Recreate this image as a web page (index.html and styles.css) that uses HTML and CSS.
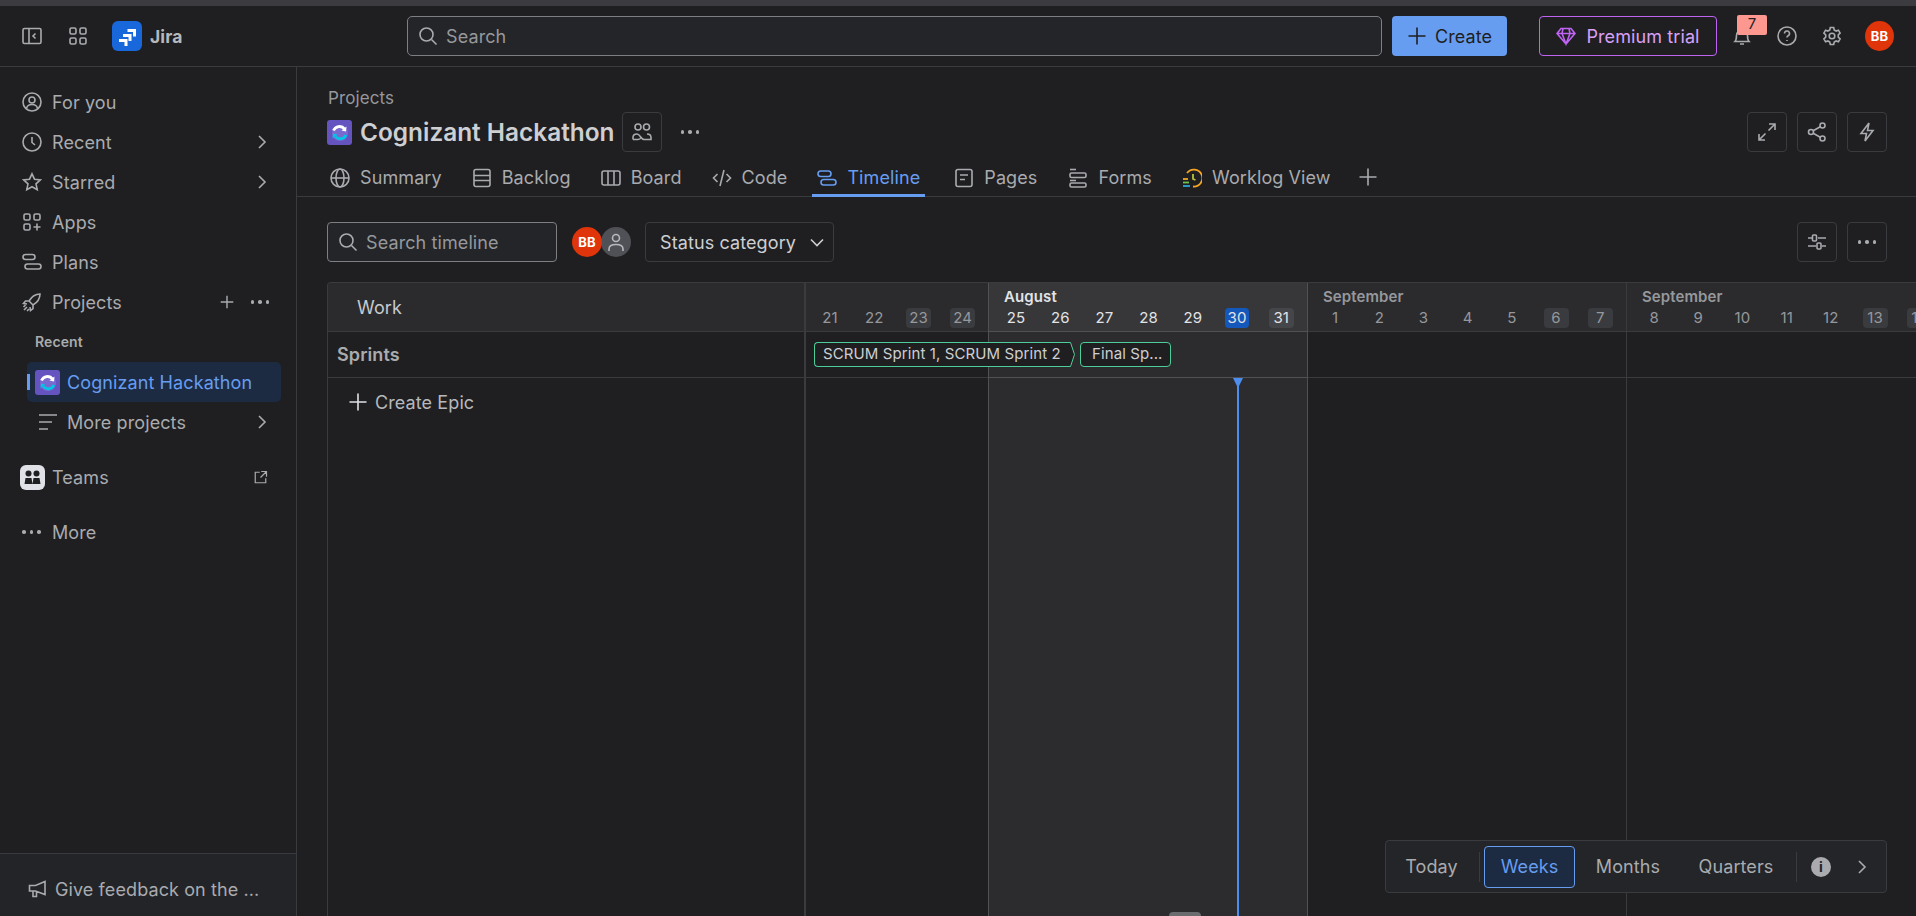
FILE: index.html
```html
<!DOCTYPE html>
<html lang="en">
<head>
    <meta charset="UTF-8">
    <title>Timeline - Cognizant Hackathon - Jira</title>
    <link rel="stylesheet" href="styles.css">
</head>
<body>

<div class="top-strip"></div>

<header class="topbar">
    <svg class="icon side-toggle" viewBox="0 0 20 20"><rect x="1" y="2.5" width="18" height="15" rx="1.5"/><path d="M7 3v14M13.5 7.5 11 10l2.5 2.5"/></svg>
    <svg class="icon grid-toggle" viewBox="0 0 20 20"><rect x="2" y="2" width="6" height="6" rx="1.5"/><rect x="12" y="2" width="6" height="6" rx="1.5"/><rect x="2" y="12" width="6" height="6" rx="1.5"/><rect x="12" y="12" width="6" height="6" rx="1.5"/></svg>
    <div class="jira-logo">
        <svg viewBox="0 0 30 30"><path d="M7 19.500h7v5.500M11 14.500h7v5.500M15.500 9.500h7v6" fill="none" stroke="#fff" stroke-width="3"/></svg>
    </div>
    <span class="jira-name">Jira</span>

    <div class="global-search">
        <svg class="icon" viewBox="0 0 20 20"><circle cx="8.500" cy="8.500" r="6.500"/><path d="m13.500 13.500 5 5"/></svg>
        <span>Search</span>
    </div>
    <button class="create-btn">
        <svg class="icon" viewBox="0 0 20 20"><path d="M10 1.500v17M1.500 10h17"/></svg>
        Create
    </button>
    <button class="premium-btn">
        <svg class="icon" viewBox="0 0 20 20"><path d="M5 2.500h10l4 5-9 10.500L1 7.500zM1 7.500h18M7 2.500 6 7.500l4 10.500 4-10.500-1-5"/></svg>
        Premium trial
    </button>
    <div class="bell">
        <svg class="icon" viewBox="0 0 20 20"><path d="M3 15.500c1.500-1.500 1.500-3 1.500-6a5.500 5.500 0 0 1 11 0c0 3 0 4.500 1.500 6zM8 18h4"/></svg>
        <span class="bell-count">7</span>
    </div>
    <svg class="icon help" viewBox="0 0 20 20"><circle cx="10" cy="10" r="9"/><path d="M7.500 7.500a2.500 2.500 0 1 1 3.600 2.300c-.8.4-1.100.9-1.100 1.700M10 14v1"/></svg>
    <svg class="icon gear" viewBox="0 0 20 20"><circle cx="10" cy="10" r="2.800"/><path d="M8.300 1.500h3.400l.5 2.400 1.900 1.100 2.300-.8 1.700 3-1.800 1.600v2.400l1.800 1.600-1.700 3-2.300-.8-1.900 1.100-.5 2.400H8.300l-.5-2.400-1.900-1.100-2.300.8-1.700-3 1.800-1.600V8.800L1.900 7.200l1.700-3 2.300.8 1.900-1.100z"/></svg>
    <span class="avatar avatar-top">BB</span>
</header>

<div class="layout">
    <nav class="sidebar">
        <div class="side-list">
            <a class="side-item">
                <svg class="icon" viewBox="0 0 20 20"><circle cx="10" cy="10" r="9"/><circle cx="10" cy="8" r="3"/><path d="M4.500 16.500c.5-3 2.500-4 5.500-4s5 1 5.500 4"/></svg>
                For you
            </a>
            <a class="side-item">
                <svg class="icon" viewBox="0 0 20 20"><circle cx="10" cy="10" r="9"/><path d="M10 5v5.500l3 2.500"/></svg>
                Recent
                <svg class="icon chevron" viewBox="0 0 20 20"><path d="m7 4 6 6-6 6"/></svg>
            </a>
            <a class="side-item">
                <svg class="icon" viewBox="0 0 20 20"><path d="m10 1.800 2.500 5.400 5.900.7-4.400 4 1.200 5.800-5.200-3-5.200 3 1.200-5.800-4.400-4 5.900-.7z"/></svg>
                Starred
                <svg class="icon chevron" viewBox="0 0 20 20"><path d="m7 4 6 6-6 6"/></svg>
            </a>
            <a class="side-item">
                <svg class="icon" viewBox="0 0 20 20"><rect x="2" y="2" width="6" height="6" rx="1.500"/><rect x="12" y="2" width="6" height="6" rx="1.500"/><rect x="2" y="12" width="6" height="6" rx="1.500"/><path d="M15 11.500v7M11.500 15h7"/></svg>
                Apps
            </a>
            <a class="side-item">
                <svg class="icon" viewBox="0 0 20 20"><rect x="1" y="2.500" width="12" height="5" rx="2.500"/><rect x="3" y="12" width="16" height="5" rx="2.500"/></svg>
                Plans
            </a>
            <a class="side-item">
                <svg class="icon" viewBox="0 0 20 20"><path d="M18 2c-5 0-8 2-11 7l4 4c5-3 7-6 7-11zM7 9H3.500L1.500 11.500 5 12M11 13v3.500L8.500 18.500 8 15M5 15l-3 3M3.500 13 1.500 15M7 17l-2 2M13 7h.01"/></svg>
                Projects
                <svg class="icon project-add" viewBox="0 0 20 20"><path d="M10 3v14M3 10h14"/></svg>
                <span class="dots project-more"><i></i><i></i><i></i></span>
            </a>
        </div>

        <div class="side-label">Recent</div>
        <a class="side-project">
            <span class="project-bar"></span>
            <svg class="project-logo" viewBox="0 0 25 25"><rect width="25" height="25" rx="3" fill="#6554c0"/><circle cx="13" cy="13" r="8" fill="#7a6ad0"/><path d="M6.500 10.500c2-4.500 8-5.500 11-1.500" fill="none" stroke="#fff" stroke-width="2.800"/><path d="m19.500 6.500-.5 5-4.500-1z" fill="#fff"/><path d="M19 15c-2 4.500-8 5-10.500 1.500" fill="none" stroke="#00c7e6" stroke-width="2.800"/><path d="m5.500 18.500.5-5 4.500 1z" fill="#00c7e6"/></svg>
            Cognizant Hackathon
        </a>
        <a class="side-more">
            <svg class="icon" viewBox="0 0 20 20"><path d="M1 3h18M1 10h13M1 17h9"/></svg>
            More projects
            <svg class="icon chevron" viewBox="0 0 20 20"><path d="m7 4 6 6-6 6"/></svg>
        </a>

        <a class="side-teams">
            <span class="teams-logo">
                <svg viewBox="0 0 25 25"><circle cx="8.500" cy="8.500" r="3" fill="#1f1f21"/><circle cx="16.500" cy="8.500" r="3" fill="#1f1f21"/><path d="M4.500 19l1-6h6l1 6zM12.500 19l1-6h6l1 6z" fill="#1f1f21"/></svg>
            </span>
            Teams
            <svg class="icon external" viewBox="0 0 20 20"><path d="M9 3H3v14h14v-6M11 2h7v7M18 2l-8 8"/></svg>
        </a>

        <a class="side-item side-last">
            <span class="dots"><i></i><i></i><i></i></span>
            More
        </a>

        <div class="feedback">
            <svg class="icon" viewBox="0 0 20 20"><path d="M1.500 6.500h6L17 2.500v13l-9.500-3.500h-6zM5 12v5.500h3.500V13"/></svg>
            Give feedback on the ...
        </div>
    </nav>

    <main class="main">
        <div class="page-head">
            <div class="breadcrumb">Projects</div>
            <div class="title-row">
                <svg class="project-logo" viewBox="0 0 25 25"><rect width="25" height="25" rx="3" fill="#6554c0"/><circle cx="13" cy="13" r="8" fill="#7a6ad0"/><path d="M6.500 10.500c2-4.500 8-5.500 11-1.500" fill="none" stroke="#fff" stroke-width="2.800"/><path d="m19.500 6.500-.5 5-4.500-1z" fill="#fff"/><path d="M19 15c-2 4.500-8 5-10.500 1.500" fill="none" stroke="#00c7e6" stroke-width="2.800"/><path d="m5.500 18.500.5-5 4.500 1z" fill="#00c7e6"/></svg>
                <h1>Cognizant Hackathon</h1>
                <button class="square-btn">
                    <svg class="icon" viewBox="0 0 20 20"><circle cx="6" cy="5" r="3"/><circle cx="14.500" cy="5" r="3"/><path d="M1 17.500v-2c0-2.500 2-3.500 4-3.500 3 0 4 5.500 7 5.500h7v-2c0-2.500-2-3.500-4-3.500M1 17.500h5c1.500 0 2.500-1 3-2"/></svg>
                </button>
                <span class="dots title-dots"><i></i><i></i><i></i></span>
                <div class="page-actions">
                    <button class="square-btn">
                        <svg class="icon" viewBox="0 0 20 20"><path d="M11.500 8.500 18 2M12 2h6v6M8.500 11.500 2 18M2 12v6h6"/></svg>
                    </button>
                    <button class="square-btn">
                        <svg class="icon" viewBox="0 0 20 20"><circle cx="4" cy="10" r="2.500"/><circle cx="15.500" cy="3.500" r="2.500"/><circle cx="15.500" cy="16.500" r="2.500"/><path d="m6.200 8.800 7-4M6.200 11.200l7 4"/></svg>
                    </button>
                    <button class="square-btn">
                        <svg class="icon" viewBox="0 0 20 20"><path d="M12 1 4 11.500h5.500L8 19l8-10.500h-5.500z"/></svg>
                    </button>
                </div>
            </div>
            <div class="tabs">
                <a class="tab">
                    <svg class="icon" viewBox="0 0 20 20"><circle cx="10" cy="10" r="9"/><ellipse cx="10" cy="10" rx="4" ry="9"/><path d="M1 10h18"/></svg>
                    Summary
                </a>
                <a class="tab">
                    <svg class="icon" viewBox="0 0 20 20"><rect x="2" y="1.500" width="16" height="17" rx="2"/><path d="M2 7.500h16M2 12.500h16"/></svg>
                    Backlog
                </a>
                <a class="tab">
                    <svg class="icon" viewBox="0 0 20 20"><rect x="1" y="3" width="18" height="14" rx="2"/><path d="M7 3v14M13 3v14"/></svg>
                    Board
                </a>
                <a class="tab">
                    <svg class="icon" viewBox="0 0 20 20"><path d="M5.500 6 1.500 10l4 4M14.500 6l4 4-4 4M12 2 8 18"/></svg>
                    Code
                </a>
                <a class="tab tab-active">
                    <svg class="icon" viewBox="0 0 20 20"><rect x="1" y="3" width="13" height="5.500" rx="2.700"/><rect x="4" y="11.500" width="15" height="5.500" rx="2.700"/></svg>
                    Timeline
                </a>
                <a class="tab tab-pages">
                    <svg class="icon" viewBox="0 0 20 20"><rect x="2" y="1.500" width="16" height="17" rx="2"/><path d="M6 7h8M6 11.500h5"/></svg>
                    Pages
                </a>
                <a class="tab">
                    <svg class="icon" viewBox="0 0 20 20"><path d="M2 1.500h6"/><rect x="2" y="5" width="16" height="4.500" rx="1.500"/><path d="M2 12.500h6"/><rect x="2" y="15" width="16" height="4" rx="1.500"/></svg>
                    Forms
                </a>
                <a class="tab">
                    <svg class="icon worklog" viewBox="0 0 20 20"><path d="M5 5a8.500 8.500 0 1 1 6 13.500" stroke="#f5a623"/><path d="M11 6v5l2.500 1" stroke="#b5c23a"/><path d="M1 11h5" stroke="#f5a623"/><path d="M1 14.500h6" stroke="#6fc04a"/><path d="M1 18h7" stroke="#2aa8d8"/></svg>
                    Worklog View
                </a>
                <svg class="icon tab-add" viewBox="0 0 20 20"><path d="M10 1.500v17M1.500 10h17"/></svg>
            </div>
        </div>

        <div class="toolbar">
            <div class="timeline-search">
                <svg class="icon" viewBox="0 0 20 20"><circle cx="8.500" cy="8.500" r="6.500"/><path d="m13.500 13.500 5 5"/></svg>
                <span>Search timeline</span>
            </div>
            <div class="avatars">
                <span class="avatar avatar-user">BB</span>
                <span class="avatar avatar-none">
                    <svg class="icon" viewBox="0 0 20 20"><circle cx="10" cy="6" r="3.500"/><path d="M3 19v-2c0-3 3-4.500 7-4.500s7 1.500 7 4.500v2"/></svg>
                </span>
            </div>
            <button class="status-btn">
                Status category
                <svg class="icon" viewBox="0 0 20 20"><path d="m4 7.500 6 6 6-6"/></svg>
            </button>
            <div class="toolbar-right">
                <button class="square-btn">
                    <svg class="icon" viewBox="0 0 20 20"><path d="M1 6h4M11 6h8M1 14h8M15 14h4"/><rect x="5.500" y="3" width="4" height="6" rx="1"/><rect x="10" y="11" width="4" height="6" rx="1"/></svg>
                </button>
                <button class="square-btn">
                    <span class="dots"><i></i><i></i><i></i></span>
                </button>
            </div>
        </div>

        <section class="timeline">
            <div class="work-col">
                <div class="work-head">Work</div>
                <div class="work-sprints">Sprints</div>
                <div class="create-epic">
                    <svg class="icon" viewBox="0 0 20 20"><path d="M10 1.500v17M1.500 10h17"/></svg>
                    Create Epic
                </div>
            </div>
            <div class="chart">
                <div class="week week-first">
                    <div class="week-head">
                        <div class="month"></div>
                        <div class="days">
                            <span class="day">21</span><span class="day">22</span><span class="day day-off">23</span><span class="day day-off">24</span>
                        </div>
                    </div>
                    <div class="week-row"></div>
                </div>
                <div class="week week-now">
                    <div class="week-head">
                        <div class="month">August</div>
                        <div class="days">
                            <span class="day">25</span><span class="day">26</span><span class="day">27</span><span class="day">28</span><span class="day">29</span><span class="day day-today">30</span><span class="day day-off">31</span>
                        </div>
                    </div>
                    <div class="week-row"></div>
                </div>
                <div class="week">
                    <div class="week-head">
                        <div class="month">September</div>
                        <div class="days">
                            <span class="day">1</span><span class="day">2</span><span class="day">3</span><span class="day">4</span><span class="day">5</span><span class="day day-off">6</span><span class="day day-off">7</span>
                        </div>
                    </div>
                    <div class="week-row"></div>
                </div>
                <div class="week">
                    <div class="week-head">
                        <div class="month">September</div>
                        <div class="days">
                            <span class="day">8</span><span class="day">9</span><span class="day">10</span><span class="day">11</span><span class="day">12</span><span class="day day-off">13</span><span class="day day-off">14</span>
                        </div>
                    </div>
                    <div class="week-row"></div>
                </div>

                <div class="sprint sprint-one">
                    SCRUM Sprint 1, SCRUM Sprint 2
                    <svg class="sprint-tip" viewBox="0 0 8 25"><path d="M0 .5h3.500L7.500 12.500 3.500 24.500H0" fill="#1f1f21" stroke="#4bce97"/></svg>
                </div>
                <div class="sprint sprint-two">Final Sp...</div>
                <div class="today-line"></div>
                <div class="scroll-handle"></div>
            </div>
        </section>

        <div class="range-bar">
            <button class="range-btn range-today">Today</button>
            <span class="range-sep"></span>
            <button class="range-btn range-weeks">Weeks</button>
            <button class="range-btn range-months">Months</button>
            <button class="range-btn range-quarters">Quarters</button>
            <span class="range-sep"></span>
            <span class="range-info">i</span>
            <svg class="icon range-next" viewBox="0 0 20 20"><path d="m7 4 6 6-6 6"/></svg>
        </div>
    </main>
</div>

</body>
</html>
```

FILE: styles.css
```css
* {
    box-sizing: border-box;
}

html, body {
    height: 100%;
    overflow: hidden;
}

body {
    margin: 0;
    display: flex;
    flex-direction: column;
    background-color: #1f1f21;
    color: #a9abaf;
    font-family: Inter, "Liberation Sans", sans-serif;
    font-size: 18px;
    letter-spacing: .1px;
}

button {
    font-family: inherit;
    font-size: inherit;
    letter-spacing: inherit;
    color: inherit;
    background: none;
    border: none;
    padding: 0;
}

.icon {
    width: 20px;
    height: 20px;
    flex: none;
    fill: none;
    stroke: currentColor;
    stroke-width: 1.6;
}

.dots {
    display: inline-flex;
    gap: 4px;
    align-items: center;
}

.dots i {
    width: 3.500px;
    height: 3.500px;
    border-radius: 50%;
    background-color: currentColor;
}

.avatar {
    display: flex;
    align-items: center;
    justify-content: center;
    border-radius: 50%;
    background-color: #e0340a;
    color: #fff;
    font-size: 13px;
    font-weight: 700;
    flex: none;
}

.top-strip {
    height: 6px;
    flex: none;
    background-color: #3b3b40;
}

/* top bar */

.topbar {
    height: 61px;
    flex: none;
    display: flex;
    align-items: center;
    padding-left: 22px;
    border-bottom: 1px solid #3a3b3e;
}

.grid-toggle {
    margin-left: 26px;
}

.jira-logo {
    width: 30px;
    height: 30px;
    flex: none;
    margin-left: 24px;
    border-radius: 6px;
    background-color: #1868db;
}

.jira-logo svg {
    display: block;
}

.jira-name {
    width: 32px;
    flex: none;
    margin-left: 8px;
    font-weight: 700;
    font-size: 17.500px;
    color: #b6b8bc;
}

.global-search {
    width: 975px;
    height: 40px;
    flex: none;
    margin-left: 225px;
    padding-left: 10px;
    display: flex;
    align-items: center;
    gap: 8px;
    background-color: #242528;
    border: 1px solid #7e7f82;
    border-radius: 5px;
}

.global-search span {
    color: #96989c;
}

.create-btn {
    width: 115px;
    height: 40px;
    flex: none;
    margin-left: 10px;
    display: flex;
    align-items: center;
    justify-content: center;
    gap: 8px;
    background-color: #669df1;
    color: #1f1f21;
    border-radius: 4px;
}

.premium-btn {
    width: 178px;
    height: 40px;
    flex: none;
    margin-left: 32px;
    display: flex;
    align-items: center;
    justify-content: center;
    gap: 10px;
    border: 1px solid #bf63f3;
    border-radius: 4px;
    color: #d8a0f7;
}

.premium-btn .icon {
    stroke: #bf63f3;
}

.bell {
    position: relative;
    flex: none;
    margin-left: 15px;
    display: flex;
}

.bell-count {
    position: absolute;
    left: 5px;
    top: -11px;
    width: 30px;
    height: 20px;
    background-color: #fd9891;
    color: #1f1f21;
    border-radius: 2px;
    font-size: 15px;
    line-height: 18px;
    text-align: center;
}

.help {
    margin-left: 25px;
}

.gear {
    margin-left: 25px;
}

.avatar-top {
    width: 29px;
    height: 30px;
    margin-left: 23px;
}

/* sidebar */

.layout {
    flex: 1;
    min-height: 0;
    display: flex;
}

.sidebar {
    width: 297px;
    flex: none;
    display: flex;
    flex-direction: column;
    border-right: 1px solid #3a3b3e;
}

.side-list {
    padding-top: 15px;
}

.side-item {
    height: 40px;
    padding-left: 22px;
    display: flex;
    align-items: center;
    gap: 10px;
}

.chevron {
    margin-left: auto;
    margin-right: 24px;
}

.project-add {
    margin-left: auto;
    width: 18px;
    height: 18px;
}

.project-more {
    margin-left: 5px;
    margin-right: 27px;
}

.side-label {
    height: 40px;
    line-height: 40px;
    padding-left: 35px;
    font-size: 14px;
    font-weight: 600;
}

.side-project {
    position: relative;
    width: 254px;
    height: 40px;
    margin-left: 27px;
    padding-left: 8px;
    display: flex;
    align-items: center;
    gap: 7px;
    background-color: #1c2b42;
    border-radius: 5px;
    color: #669df1;
}

.project-bar {
    position: absolute;
    left: 0;
    top: 12px;
    width: 3px;
    height: 16px;
    background-color: #669df1;
}

.project-logo {
    width: 25px;
    height: 25px;
    flex: none;
}

.side-more {
    height: 40px;
    padding-left: 38px;
    display: flex;
    align-items: center;
    gap: 9px;
}

.side-teams {
    height: 40px;
    margin-top: 15px;
    padding-left: 20px;
    display: flex;
    align-items: center;
    gap: 7px;
}

.teams-logo {
    width: 25px;
    height: 25px;
    border-radius: 6px;
    background-color: #dfe1e6;
}

.teams-logo svg {
    display: block;
}

.external {
    width: 15px;
    height: 15px;
    margin-left: auto;
    margin-right: 28px;
}

.side-last {
    margin-top: 15px;
}

.side-last .dots {
    width: 20px;
}

.feedback {
    margin-top: auto;
    height: 63px;
    padding: 8px 0 0 28px;
    display: flex;
    align-items: center;
    gap: 7px;
    background-color: #232428;
    border-top: 1px solid #3a3b3e;
    white-space: nowrap;
}

/* page head */

.main {
    position: relative;
    flex: 1;
    min-width: 0;
    display: flex;
    flex-direction: column;
}

.page-head {
    padding-top: 20px;
    border-bottom: 1px solid #3a3b3e;
}

.breadcrumb {
    height: 22px;
    margin-left: 31px;
    line-height: 22px;
    color: #96989c;
    font-size: 17px;
}

.title-row {
    height: 40px;
    margin-top: 3px;
    padding: 0 29px 0 30px;
    display: flex;
    align-items: center;
}

h1 {
    margin: 0 0 0 8px;
    font-size: 24.400px;
    font-weight: 600;
    letter-spacing: 0;
    color: #cecfd2;
    white-space: nowrap;
}

.square-btn {
    width: 40px;
    height: 40px;
    display: flex;
    align-items: center;
    justify-content: center;
    border: 1px solid #3a3b3e;
    border-radius: 4px;
    flex: none;
}

.title-row h1 + .square-btn {
    margin-left: 7px;
}

.title-dots {
    margin-left: 19px;
}

.page-actions {
    margin-left: auto;
    display: flex;
    gap: 10px;
}

.tabs {
    height: 40px;
    margin-top: 5px;
    margin-bottom: -1px;
    padding-left: 28px;
    display: flex;
    align-items: center;
}

.tab {
    height: 40px;
    padding: 4px 5px 0 5px;
    margin-right: 20px;
    display: flex;
    align-items: center;
    gap: 10px;
    border-bottom: 3px solid transparent;
}

.tab-active {
    margin-right: 24px;
    color: #669df1;
    border-bottom-color: #669df1;
}

.tab-pages {
    margin-right: 21px;
}

.worklog {
    stroke-width: 1.800;
}

.tab-add {
    margin-left: 2px;
}

/* toolbar */

.toolbar {
    height: 40px;
    margin-top: 25px;
    padding: 0 29px 0 30px;
    display: flex;
    align-items: center;
}

.timeline-search {
    width: 230px;
    height: 40px;
    padding-left: 10px;
    display: flex;
    align-items: center;
    gap: 8px;
    background-color: #242528;
    border: 1px solid #7e7f82;
    border-radius: 4px;
}

.timeline-search span {
    color: #96989c;
}

.avatars {
    display: flex;
    margin-left: 15px;
}

.avatar-user {
    width: 30px;
    height: 30px;
    position: relative;
    z-index: 1;
}

.avatar-none {
    width: 30px;
    height: 30px;
    margin-left: -1px;
    background-color: #505156;
    color: #b6b8bc;
}

.status-btn {
    width: 189px;
    height: 40px;
    margin-left: 14px;
    padding: 0 6px 0 14px;
    display: flex;
    align-items: center;
    justify-content: space-between;
    border: 1px solid #3a3b3e;
    border-radius: 4px;
    color: #cecfd2;
}

.toolbar-right {
    margin-left: auto;
    display: flex;
    gap: 10px;
}

/* timeline */

.timeline {
    flex: 1;
    min-height: 0;
    margin-top: 20px;
    margin-left: 30px;
    display: flex;
    overflow: hidden;
    border-top: 1px solid #3a3b3e;
    border-left: 1px solid #3a3b3e;
    border-top-left-radius: 4px;
}

.work-col {
    width: 478px;
    flex: none;
    border-right: 2px solid #3a3b3e;
}

.work-head {
    height: 49px;
    padding-left: 29px;
    display: flex;
    align-items: center;
    background-color: #2b2b2e;
    border-bottom: 1px solid #3a3b3e;
    color: #c8c9cc;
}

.work-sprints {
    height: 46px;
    padding-left: 9px;
    display: flex;
    align-items: center;
    font-weight: 600;
    border-bottom: 1px solid #3a3b3e;
}

.create-epic {
    height: 48px;
    padding-left: 20px;
    display: flex;
    align-items: center;
    gap: 7px;
    color: #b6b8bc;
}

.create-epic .icon {
    color: #dfe1e6;
}

.chart {
    position: relative;
    flex: none;
    width: 1140px;
    display: flex;
}

.week {
    width: 319px;
    flex: none;
    border-right: 1px solid #3a3b3e;
}

.week-first {
    width: 183px;
    border-right-color: #505155;
}

.week-now {
    background-color: #2c2c2e;
    border-right-color: #505155;
}

.week-head {
    height: 49px;
    padding-left: 5px;
    background-color: #2b2b2e;
    border-bottom: 1px solid #3a3b3e;
}

.week-first .week-head {
    padding-left: 2px;
}

.week-now .week-head {
    background-color: #37373a;
    border-bottom-color: #505155;
}

.month {
    height: 25px;
    padding: 5px 0 0 10px;
    font-size: 15px;
    font-weight: 600;
    line-height: 18px;
    color: #96989c;
}

.week-now .month {
    color: #e2e3e6;
}

.days {
    display: flex;
}

.day {
    width: 44.200px;
    height: 20px;
    flex: none;
    text-align: center;
    font-size: 15px;
    line-height: 20px;
    color: #96989c;
}

.week-now .day {
    color: #e2e3e6;
}

.day-off, .day-today {
    border-radius: 4px;
}

.day-off {
    background-color: #3a3b3e;
    width: 25px;
    margin: 0 9.600px;
}

.week-now .day-off {
    background-color: #45464a;
}

.day-today {
    width: 24px;
    margin: 0 10.100px;
    background-color: #1558bc;
    color: #fff;
}

.week-row {
    height: 46px;
    border-bottom: 1px solid #3a3b3e;
}

.week-now .week-row {
    border-bottom-color: #505155;
}

.sprint {
    position: absolute;
    top: 59px;
    height: 25px;
    padding-left: 8px;
    line-height: 22px;
    font-size: 15px;
    color: #cecfd2;
    background-color: #1f1f21;
    border: 1px solid #4bce97;
    border-radius: 4px;
    white-space: nowrap;
}

.sprint-one {
    left: 8px;
    width: 253px;
    border-right: none;
    border-radius: 4px 0 0 4px;
}

.sprint-tip {
    position: absolute;
    right: -8px;
    top: -1px;
    width: 8px;
    height: 25px;
}

.sprint-two {
    left: 274px;
    width: 91px;
    padding-left: 11px;
}

.today-line {
    position: absolute;
    left: 431px;
    top: 95px;
    bottom: 0;
    width: 2px;
    background-color: #4c8df0;
}

.today-line::before {
    content: "";
    position: absolute;
    left: -4px;
    top: 0;
    border-left: 5px solid transparent;
    border-right: 5px solid transparent;
    border-top: 10px solid #4c8df0;
}

.scroll-handle {
    position: absolute;
    left: 363px;
    bottom: 0;
    width: 32px;
    height: 4px;
    border-radius: 4px 4px 0 0;
    background-color: #6b6c70;
}

/* bottom range control */

.range-bar {
    position: absolute;
    right: 29px;
    bottom: 23px;
    width: 502px;
    height: 53px;
    padding-left: 19px;
    display: flex;
    align-items: center;
    background-color: #242528;
    border: 1px solid #3a3b3e;
    border-radius: 4px;
}

.range-btn {
    height: 42px;
    flex: none;
}

.range-sep {
    width: 1px;
    height: 30px;
    flex: none;
    background-color: #3a3b3e;
}

.range-today {
    width: 53px;
    margin-right: 21px;
}

.range-weeks {
    width: 91px;
    margin-left: 4px;
    color: #669df1;
    background-color: #1c2b42;
    border: 1px solid #669df1;
    border-radius: 4px;
}

.range-months {
    margin-left: 20px;
    width: 66px;
}

.range-quarters {
    margin-left: 37px;
    width: 76px;
    margin-right: 22px;
}

.range-info {
    width: 20px;
    height: 20px;
    flex: none;
    margin-left: 14px;
    border-radius: 50%;
    background-color: #a9abaf;
    color: #242528;
    font-size: 14px;
    font-weight: 700;
    line-height: 20px;
    text-align: center;
}

.range-next {
    margin-left: 21px;
}
```
